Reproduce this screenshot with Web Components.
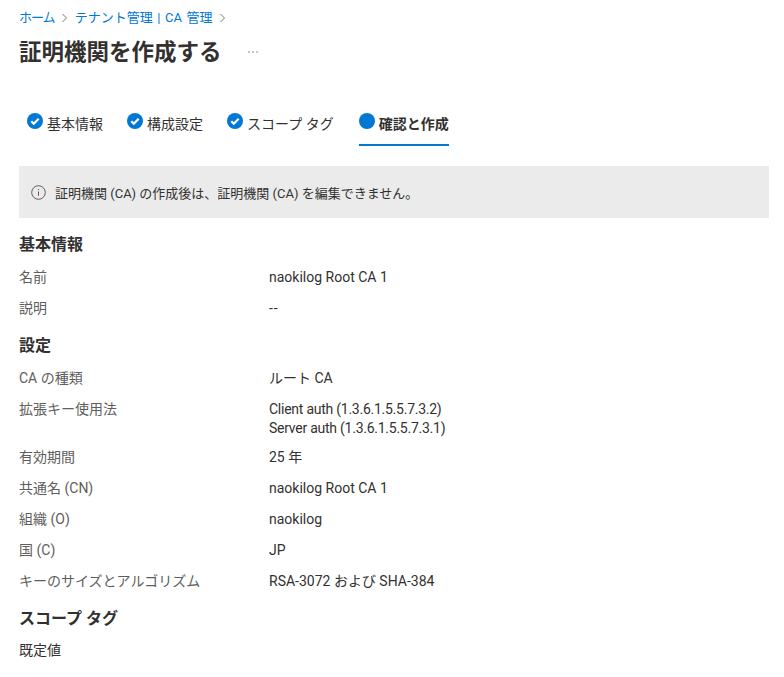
<!DOCTYPE html>
<html lang="ja">
<head>
<meta charset="utf-8">
<title>証明機関を作成する</title>
<style>
  html, body { margin: 0; background: #fff; }
  body {
    font-family: Roboto, "Noto Sans CJK JP", sans-serif;
    font-size: 14px;
    color: #323130;
  }
  .tight { letter-spacing: -0.25px; }
  .dash { letter-spacing: 1px; }
</style>
</head>
<body>
<template id="tpl-page">
  <style>
    :host { display: block; width: 750px; padding: 9px 0 0 19px; }
  </style>
  <slot></slot>
</template>

<template id="tpl-crumbs">
  <style>
    :host { display: flex; align-items: center; height: 18px; font-size: 13px; line-height: 18px; color: #0078d4; }
    svg { margin: 0 7px 0 6px; flex: none; }
    .home { letter-spacing: -1px; }
    .path { word-spacing: 1.4px; }
  </style>
  <span class="home">ホーム</span>
  <svg width="7" height="10" viewBox="0 0 7 10"><path d="M1.5 1l4 4-4 4" fill="none" stroke="#797775"/></svg>
  <span class="path">テナント管理 | CA 管理</span>
  <svg width="7" height="10" viewBox="0 0 7 10"><path d="M1.5 1l4 4-4 4" fill="none" stroke="#797775"/></svg>
</template>

<template id="tpl-title">
  <style>
    :host { display: flex; align-items: center; height: 36px; margin-top: 7px; font-size: 22.5px; font-weight: 600; line-height: 36px; color: #323130; }
    .more { margin-left: 25px; width: 12px; height: 12px; }
  </style>
  <slot></slot>
  <svg class="more" viewBox="0 0 12 12"><g fill="#605e5c"><circle cx="2" cy="6" r=".7"/><circle cx="6" cy="6" r=".7"/><circle cx="10" cy="6" r=".7"/></g></svg>
</template>

<template id="tpl-tabs">
  <style>
    :host { display: flex; margin: 37px 0 0 8px; gap: 24px; height: 39px; }
  </style>
  <slot></slot>
</template>

<template id="tpl-tab">
  <style>
    :host { display: block; box-sizing: border-box; height: 39px; padding-top: 6px; font-size: 14px; line-height: 20px; color: #323130; }
    :host([active]) { border-bottom: 2px solid #0078d4; font-weight: 600; margin-left: 1px; }
    .in { display: flex; align-items: flex-start; gap: 4px; }
    svg { width: 16px; height: 16px; flex: none; }
    span { margin-top: 1px; }
  </style>
  <div class="in">
    <svg viewBox="0 0 16 16"><circle cx="8" cy="8" r="8" fill="#0078d4"/><path class="chk" d="M4.3 8.2l2.5 2.5 4.9-5" fill="none" stroke="#fff" stroke-width="2.2"/></svg>
    <span><slot></slot></span>
  </div>
</template>

<template id="tpl-banner">
  <style>
    :host { display: flex; align-items: center; box-sizing: border-box; height: 52px; margin-top: 20px; padding-left: 12px; gap: 9px; background: #ebebeb; font-size: 13px; color: #323130; }
    svg { width: 15px; height: 15px; flex: none; }
  </style>
  <svg viewBox="0 0 15 15"><circle cx="7.5" cy="7.5" r="6.8" fill="none" stroke="#605e5c"/><path d="M7.5 6.5v4.2" stroke="#8a3a7a" fill="none"/><circle cx="7.5" cy="4.6" r=".7" fill="#8a3a7a"/></svg>
  <span><slot></slot></span>
</template>

<template id="tpl-heading">
  <style>
    :host { display: block; font-size: 16px; font-weight: 600; line-height: 20px; color: #323130; }
  </style>
  <slot></slot>
</template>

<template id="tpl-row">
  <style>
    :host { display: grid; grid-template-columns: 250px 1fr; line-height: 19px; font-size: 14px; padding-bottom: 12px; }
    .k { color: #605e5c; }
    .v { color: #323130; }
  </style>
  <div class="k"><slot name="k"></slot></div>
  <div class="v"><slot></slot></div>
</template>

<script>
  function define(name, id) {
    customElements.define(name, class extends HTMLElement {
      constructor() {
        super();
        this.attachShadow({ mode: "open" });
        this.shadowRoot.appendChild(document.getElementById(id).content.cloneNode(true));
      }
    });
  }
  define("ca-page", "tpl-page");
  define("ca-crumbs", "tpl-crumbs");
  define("ca-title", "tpl-title");
  define("ca-tabs", "tpl-tabs");
  define("ca-banner", "tpl-banner");
  define("ca-heading", "tpl-heading");
  define("ca-row", "tpl-row");

  class CaTab extends HTMLElement {
    constructor() {
      super();
      this.attachShadow({ mode: "open" });
      this.shadowRoot.appendChild(document.getElementById("tpl-tab").content.cloneNode(true));
    }
    connectedCallback() {
      // the active step has a plain dot, no tick
      if (this.hasAttribute("active")) this.shadowRoot.querySelector(".chk").remove();
    }
  }
  customElements.define("ca-tab", CaTab);
</script>

<ca-page>
  <ca-crumbs></ca-crumbs>
  <ca-title>証明機関を作成する</ca-title>
  <ca-tabs>
    <ca-tab>基本情報</ca-tab>
    <ca-tab>構成設定</ca-tab>
    <ca-tab>スコープ タグ</ca-tab>
    <ca-tab active>確認と作成</ca-tab>
  </ca-tabs>
  <ca-banner>証明機関 (CA) の作成後は、証明機関 (CA) を編集できません。</ca-banner>
  <ca-heading style="margin-top:17px;margin-bottom:13px">基本情報</ca-heading>
  <ca-row><span slot="k">名前</span>naokilog Root CA 1</ca-row>
  <ca-row><span slot="k">説明</span><span class="dash">--</span></ca-row>
  <ca-heading style="margin-top:6px;margin-bottom:13px">設定</ca-heading>
  <ca-row><span slot="k">CA の種類</span>ルート CA</ca-row>
  <ca-row style="padding-bottom:10px"><span slot="k">拡張キー使用法</span><span class="tight">Client auth (1.3.6.1.5.5.7.3.2)<br>Server auth (1.3.6.1.5.5.7.3.1)</span></ca-row>
  <ca-row><span slot="k">有効期間</span>25 年</ca-row>
  <ca-row><span slot="k">共通名 (CN)</span>naokilog Root CA 1</ca-row>
  <ca-row><span slot="k">組織 (O)</span>naokilog</ca-row>
  <ca-row><span slot="k">国 (C)</span>JP</ca-row>
  <ca-row><span slot="k">キーのサイズとアルゴリズム</span>RSA-3072 および SHA-384</ca-row>
  <ca-heading style="margin-top:6px;margin-bottom:12px">スコープ タグ</ca-heading>
  <ca-row><span slot="k" style="color:#323130">既定値</span></ca-row>
</ca-page>
</body>
</html>
